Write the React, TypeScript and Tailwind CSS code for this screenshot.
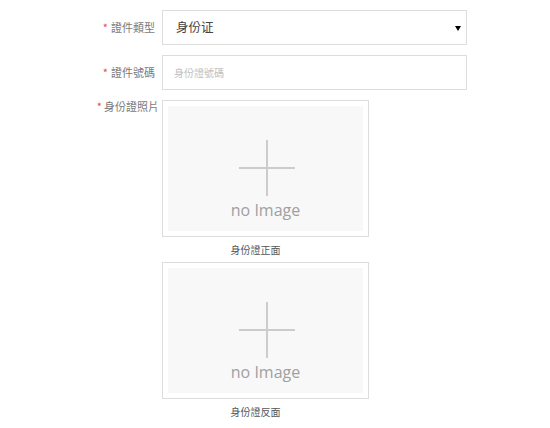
const cjk = '"Noto Sans CJK TC", "Noto Sans CJK SC", sans-serif';

function PhotoBox({ caption }: { caption: string }) {
  return (
    <div className="w-[207px]">
      <div className="h-[137px] border border-[#dddddd] bg-white p-[5px]">
        <div className="flex h-full flex-col items-center bg-[#f8f8f8] pt-[34px]">
          <svg width="56" height="56" viewBox="0 0 56 56" className="ml-[2px]">
            <rect x="27" y="0" width="2" height="56" fill="#cccccc" />
            <rect x="0" y="27" width="56" height="2" fill="#cccccc" />
          </svg>
          <span
            className="mt-[3px] text-[16px] leading-[22px] text-[#a0a0a0]"
            style={{ fontFamily: '"Open Sans", sans-serif' }}
          >
            no Image
          </span>
        </div>
      </div>
      <p className="pr-5 text-center text-[10px] leading-[25px] text-[#555555]">
        {caption}
      </p>
    </div>
  );
}

export default function App() {
  return (
    <div
      className="min-h-[428px] w-[550px] bg-white pt-[10px]"
      style={{ fontFamily: cjk }}
    >
      <div className="flex flex-col gap-[10px]">
        {/* 證件類型 */}
        <div className="flex items-center">
          <label className="w-[162px] pr-[7px] text-right text-[11px] text-[#7a7a7a]">
            <span className="mr-[3px] text-[#ee4455]">*</span>證件類型
          </label>
          <div className="relative flex h-[35px] w-[305px] items-center border border-[#dddddd] bg-white pl-[13px] text-[12.5px] text-[#444444]">
            身份证
            <span className="absolute right-[5px] top-[15px] h-0 w-0 border-x-[3px] border-t-[5px] border-x-transparent border-t-black" />
          </div>
        </div>

        {/* 證件號碼 */}
        <div className="flex items-center">
          <label className="w-[162px] pr-[7px] text-right text-[11px] text-[#7a7a7a]">
            <span className="mr-[3px] text-[#ee4455]">*</span>證件號碼
          </label>
          <div className="flex h-[35px] w-[305px] items-center border border-[#dddddd] bg-white pl-[11px] text-[10px] text-[#c0c0c0]">
            身份證號碼
          </div>
        </div>

        {/* 身份證照片 */}
        <div className="flex items-start">
          <label className="-mt-[1px] w-[162px] whitespace-nowrap pr-[3px] text-right text-[11px] leading-[14px] text-[#7a7a7a]">
            <span className="mr-[2px] text-[#ee4455]">*</span>身份證照片
          </label>
          <div className="flex flex-col">
            <PhotoBox caption="身份證正面" />
            <PhotoBox caption="身份證反面" />
          </div>
        </div>
      </div>
    </div>
  );
}
